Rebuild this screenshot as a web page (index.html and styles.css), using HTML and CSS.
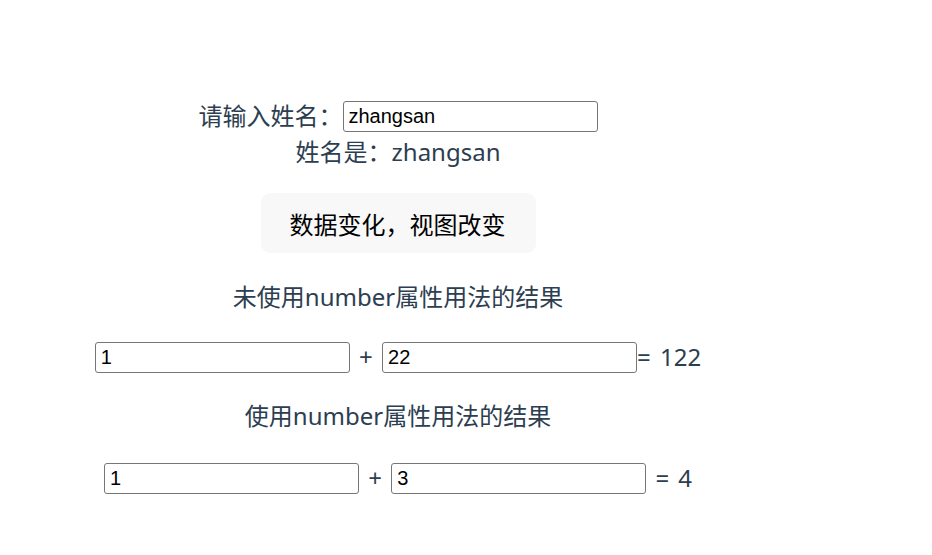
FILE: index.html
```html
<!DOCTYPE html>
<html lang="zh-CN">
<head>
<meta charset="utf-8">
<title>Vue demo</title>
<link rel="stylesheet" href="styles.css">
</head>
<body>
<div class="app">
  <div class="line first">请输入姓名：<input class="field" type="text" value="zhangsan"></div>
  <div class="line">姓名是：zhangsan</div>
  <button class="btn" type="button">数据变化，视图改变</button>
  <div class="line title t1">未使用number属性用法的结果</div>
  <div class="line row r1"><input class="field" type="text" value="1"> + <input class="field" type="text" value="22">= 122</div>
  <div class="line title t2">使用number属性用法的结果</div>
  <div class="line row r2"><input class="field" type="text" value="1"> + <input class="field" type="text" value="3"> = 4</div>
</div>
</body>
</html>
```
FILE: styles.css
```css
html, body {
  margin: 0;
  padding: 0;
  background: #ffffff;
}
.app {
  width: 796px;
  padding-top: 98px;
  text-align: center;
  color: #2c3e50;
  font-family: "Noto Sans", "Noto Sans CJK SC", sans-serif;
  font-size: 24px;
}
.line {
  height: 36px;
  line-height: 36px;
  white-space: nowrap;
}
.field {
  box-sizing: border-box;
  width: 255px;
  height: 31px;
  margin: 3px 0 0;
  padding: 0 5px;
  border: 1px solid #767676;
  border-radius: 3px;
  font-family: "Liberation Sans", Arial, sans-serif;
  font-size: 20px;
  color: #000;
  background: #fff;
  vertical-align: top;
  outline: none;
}
.btn {
  display: block;
  margin: 23px auto 0;
  height: 60px;
  padding: 0 30px 0 29px;
  border: none;
  border-radius: 9px;
  background: #f8f8f8;
  color: #000;
  font-family: "Noto Sans CJK SC", "Noto Sans", sans-serif;
  font-size: 24px;
}
.t1 { margin-top: 26px; }
.r1 { margin-top: 24px; }
.t2 { margin-top: 23px; }
.r2 { margin-top: 26px; }
.row { word-spacing: 3px; }
```
